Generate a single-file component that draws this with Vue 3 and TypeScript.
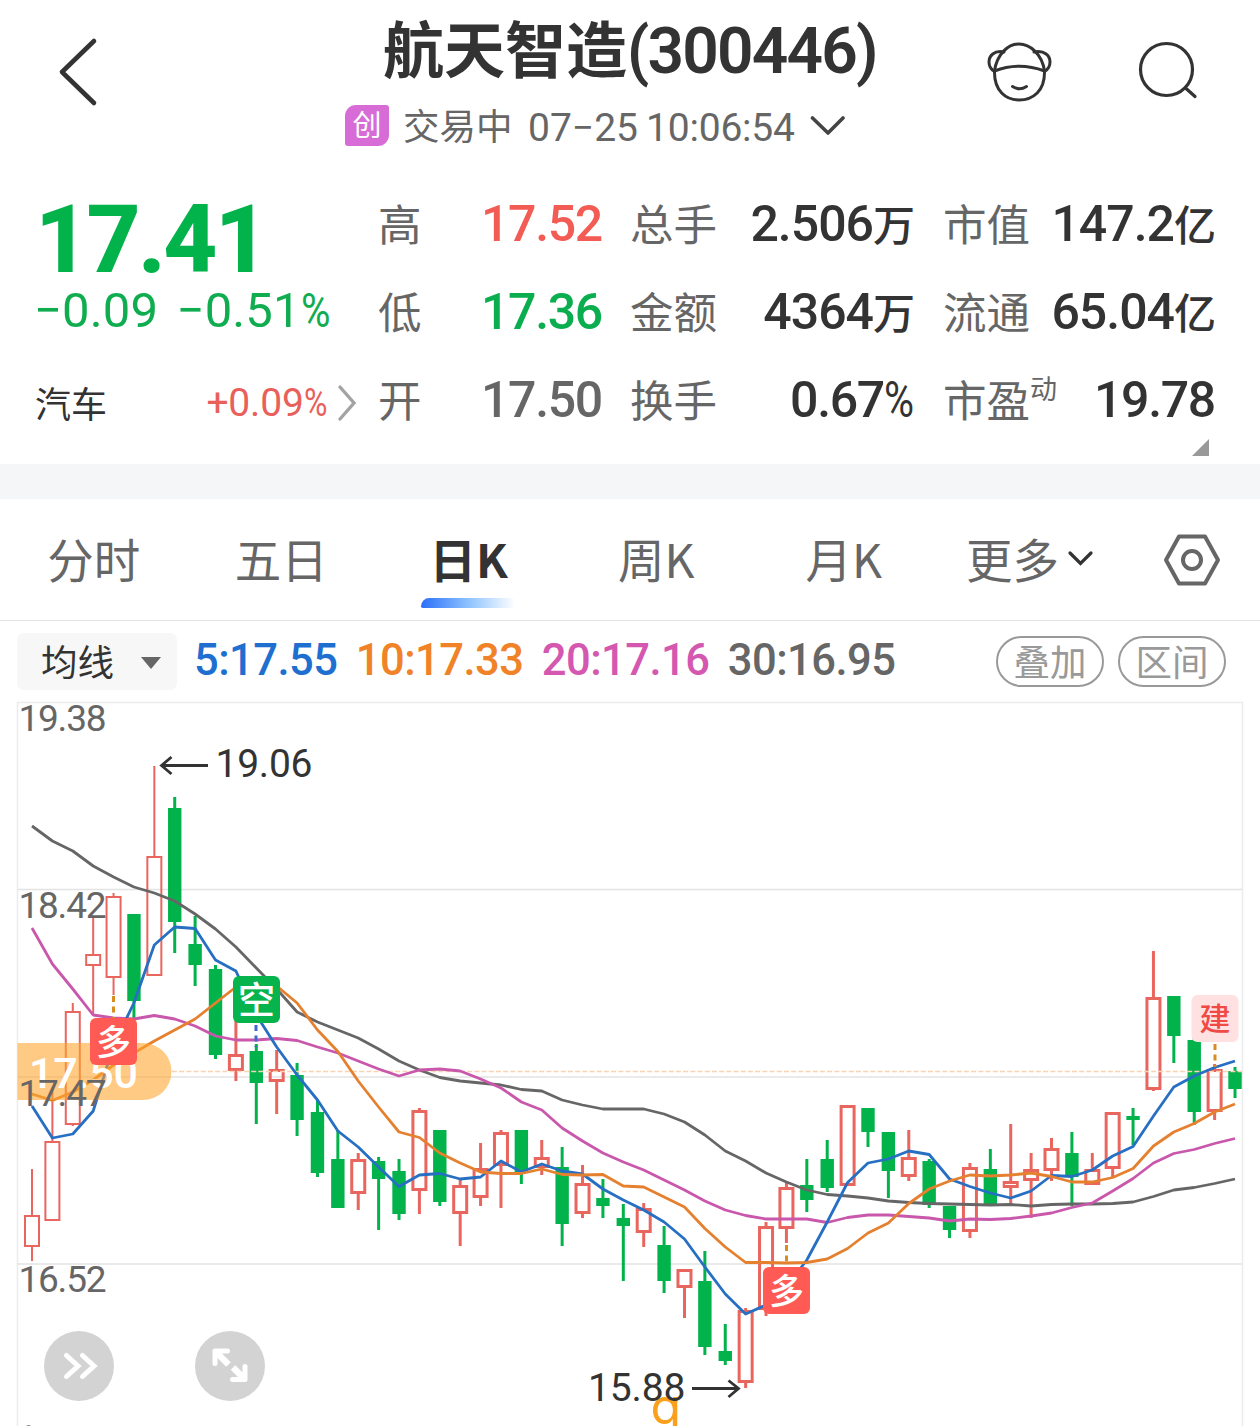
<script setup lang="ts">
interface Quote {
  label: string
  sup?: string
  value: string
  unit?: string
  tone: string
}

// kind, high, body top, body bottom, low
type Candle = ['r' | 'g', number, number, number, number]

const quotes: Quote[] = [
  { label: '高', value: '17.52', tone: 'up' },
  { label: '总手', value: '2.506', unit: '万', tone: 'dark' },
  { label: '市值', value: '147.2', unit: '亿', tone: 'dark' },
  { label: '低', value: '17.36', tone: 'down' },
  { label: '金额', value: '4364', unit: '万', tone: 'dark' },
  { label: '流通', value: '65.04', unit: '亿', tone: 'dark' },
  { label: '开', value: '17.50', tone: 'flat' },
  { label: '换手', value: '0.67', unit: '%', tone: 'dark' },
  { label: '市盈', sup: '动', value: '19.78', tone: 'dark' },
]

const tabs = ['分时', '五日', '日K', '周K', '月K']
const activeTab = '日K'

const averages = [
  { text: '5:17.55', color: '#1f6fd0' },
  { text: '10:17.33', color: '#f08228' },
  { text: '20:17.16', color: '#d457b0' },
  { text: '30:16.95', color: '#666666' },
]

const candles: Candle[] = [
  ['r', 1169, 1215, 1247, 1261], ['r', 1088, 1141, 1221, 1221], ['r', 1003, 1011, 1125, 1126],
  ['r', 918, 954, 966, 1014], ['r', 893, 896, 978, 995], ['g', 914, 914, 1001, 1018],
  ['r', 766, 856, 976, 976], ['g', 797, 808, 922, 953], ['g', 916, 944, 965, 986],
  ['g', 965, 969, 1055, 1059], ['r', 1018, 1054, 1071, 1081], ['g', 1044, 1051, 1083, 1124],
  ['r', 1050, 1069, 1082, 1114], ['g', 1063, 1075, 1120, 1136], ['g', 1100, 1112, 1173, 1177],
  ['g', 1130, 1159, 1208, 1208], ['r', 1153, 1159, 1194, 1210], ['g', 1157, 1161, 1179, 1230],
  ['g', 1159, 1171, 1214, 1220], ['r', 1108, 1110, 1191, 1214], ['g', 1130, 1130, 1202, 1206],
  ['r', 1179, 1185, 1214, 1246], ['r', 1143, 1168, 1198, 1206], ['r', 1130, 1132, 1166, 1208],
  ['g', 1130, 1130, 1173, 1184], ['r', 1140, 1157, 1168, 1175], ['g', 1147, 1167, 1224, 1246],
  ['r', 1165, 1183, 1214, 1218], ['g', 1179, 1198, 1206, 1218], ['g', 1204, 1218, 1226, 1281],
  ['r', 1203, 1208, 1233, 1247], ['g', 1226, 1245, 1281, 1293], ['r', 1269, 1269, 1288, 1318],
  ['g', 1251, 1281, 1347, 1355], ['g', 1324, 1351, 1361, 1365], ['r', 1308, 1310, 1383, 1388],
  ['r', 1222, 1226, 1310, 1316], ['r', 1183, 1187, 1229, 1243], ['g', 1159, 1185, 1200, 1212],
  ['g', 1140, 1159, 1188, 1192], ['r', 1105, 1105, 1186, 1186], ['g', 1108, 1108, 1132, 1147],
  ['g', 1132, 1132, 1171, 1198], ['r', 1130, 1157, 1177, 1181], ['g', 1159, 1161, 1205, 1208],
  ['g', 1206, 1206, 1230, 1238], ['r', 1163, 1167, 1232, 1238], ['g', 1149, 1169, 1205, 1205],
  ['r', 1124, 1181, 1188, 1206], ['r', 1153, 1169, 1181, 1218], ['r', 1138, 1148, 1171, 1181],
  ['g', 1132, 1153, 1177, 1206], ['r', 1153, 1169, 1185, 1185], ['r', 1112, 1112, 1169, 1178],
  ['g', 1108, 1116, 1120, 1145], ['r', 951, 997, 1090, 1091], ['g', 996, 996, 1036, 1063],
  ['g', 1030, 1040, 1112, 1125], ['r', 1064, 1069, 1112, 1120], ['g', 1067, 1071, 1089, 1098],
]

const ma5 = [1106, 1138, 1134, 1111, 1045, 1003, 945, 927, 928.5, 960, 971, 1015, 1047, 1075, 1100, 1131, 1147, 1167, 1186.5, 1175, 1173.5, 1179, 1177, 1161, 1172, 1164, 1171, 1174, 1189, 1200, 1210, 1222, 1239, 1267, 1294, 1314, 1305, 1287, 1260, 1222, 1182.5, 1163, 1159, 1151, 1154.5, 1179, 1186.5, 1193, 1198, 1191, 1175.5, 1176.5, 1170, 1156, 1146.5, 1116, 1087, 1076, 1067.5, 1061]
const ma10 = [1094, 1100.5, 1092, 1080, 1065, 1053, 1041, 1030, 1019, 1003, 987, 982, 986, 1003, 1030, 1051.5, 1081, 1107, 1132, 1137.5, 1153, 1163, 1172, 1173.5, 1173.5, 1169, 1174.5, 1175, 1174.5, 1186, 1187, 1197, 1207, 1228.5, 1247, 1262.5, 1262.5, 1263, 1262.5, 1259, 1248.5, 1233, 1223, 1203.5, 1189, 1181, 1175, 1176, 1175, 1173, 1176.5, 1182, 1182, 1177.5, 1168.5, 1146, 1132, 1123.5, 1112, 1104]
const ma20 = [928, 964, 989, 1015, 1018, 1019, 1015.5, 1019, 1026, 1036, 1040, 1040, 1038.5, 1040.5, 1047, 1053, 1061, 1069, 1076, 1070, 1069, 1071, 1079, 1088, 1102, 1110, 1128, 1141, 1153, 1162, 1170, 1180, 1190, 1201, 1210, 1215.5, 1219, 1219, 1219, 1222.5, 1217.5, 1215, 1215, 1216.5, 1218, 1221, 1219, 1219.5, 1218.5, 1216, 1213, 1207.5, 1203, 1191, 1178.5, 1163, 1153.5, 1149.5, 1143.5, 1138.5]
const ma30 = [826, 841, 851, 866, 877, 887, 893, 901, 914, 929, 947, 968, 989, 1012, 1022, 1030, 1038, 1049, 1061, 1070, 1077.5, 1081, 1083, 1085, 1089.5, 1091, 1100, 1105, 1109, 1109, 1109, 1114, 1122, 1135, 1151, 1161, 1173, 1182, 1190, 1194.5, 1196, 1198, 1201, 1202.5, 1203.5, 1204, 1204.5, 1205, 1204.5, 1206, 1204.5, 1204, 1204, 1203.5, 1202, 1196.5, 1190, 1187.5, 1183.5, 1179]

const cx = (i: number): number => 32 + i * 20.39
const line = (ys: number[]): string => ys.map((y, i) => `${cx(i).toFixed(1)},${y}`).join(' ')

// the oldest bars are drawn with a finer outline
const pen = (i: number): number => (i < 7 ? 2 : 3)

const lines = [
  { points: line(ma30), color: '#666666' },
  { points: line(ma20), color: '#c957ab' },
  { points: line(ma5), color: '#266fc2' },
  { points: line(ma10), color: '#e5802f' },
]

const axis = [
  { text: '19.38', y: 731 },
  { text: '18.42', y: 918 },
  { text: '17.47', y: 1106 },
  { text: '16.52', y: 1292 },
]

const marks = [
  { text: '多', x: 90, y: 1018, bg: '#ff5a54', fg: '#fff', size: 35 },
  { text: '空', x: 233, y: 976, bg: '#06b34c', fg: '#fff', size: 37 },
  { text: '多', x: 763, y: 1267, bg: '#ff5a54', fg: '#fff', size: 35 },
  { text: '建', x: 1191.5, y: 995, bg: '#ffe1e1', fg: '#f04a45', size: 31 },
]
</script>

<template>
  <div class="page">
    <header class="top">
      <div class="side left">
        <svg width="48" height="76" viewBox="0 0 48 76"><path d="M41 7 L9 38 L41 69" fill="none" stroke="#333" stroke-width="4.6" stroke-linecap="round" stroke-linejoin="round" /></svg>
      </div>
      <div class="heading">
        <h1>航天智造<span class="code">(300446)</span></h1>
        <div class="status">
          <span class="board">创</span>
          <span class="state">交易中</span>
          <span class="date">07−25</span>
          <span class="time">10:06:54</span>
          <svg width="38" height="26" viewBox="0 0 38 26"><path d="M2.500 5 L18 20 L33 5" fill="none" stroke="#444" stroke-width="3.6" stroke-linecap="round" stroke-linejoin="round" /></svg>
        </div>
      </div>
      <div class="side right">
        <svg width="70" height="66" viewBox="984 38 70 66">
          <g fill="none" stroke="#333" stroke-width="3" stroke-linecap="round" stroke-linejoin="round">
            <path d="M994.5 71 C994 91 1006 100 1019 100 C1033 100 1045 91 1044.5 71" />
            <path d="M994.5 71 C997 54 1008 44 1019 44 C1030 44 1042 54 1044.5 71" />
            <path d="M994.5 71 Q1019 61.5 1044.5 71" />
            <path d="M1004 52 C994 50 989 56 989 62 C989 67 992 70 994.5 71.5" />
            <path d="M1034 52 C1045 50 1050 56 1050 62 C1050 67 1047 70 1044.5 71.5" />
            <path d="M1012.5 86.5 Q1019.5 91 1026.5 86.5" />
          </g>
        </svg>
        <svg width="66" height="66" viewBox="1134 38 66 66">
          <g fill="none" stroke="#333" stroke-width="3.2" stroke-linecap="round">
            <circle cx="1166.5" cy="69.5" r="26" /><path d="M1185.5 88 L1195 96.5" />
          </g>
        </svg>
      </div>
    </header>

    <section class="summary">
      <div class="price">
        <div class="last">17.41</div>
        <div class="change"><span>−0.09</span><span>−0.51<i class="pct">%</i></span></div>
        <div class="sector">
          <span class="name">汽车</span>
          <span class="rate">+0.09<i class="pct">%</i></span>
          <svg width="22" height="40" viewBox="0 0 22 40"><path d="M4 4 L18 20 L4 36" fill="none" stroke="#a3a3a3" stroke-width="3.4" stroke-linecap="round" /></svg>
        </div>
      </div>
      <div class="grid">
        <div v-for="q in quotes" :key="q.label" class="cell">
          <span class="label">{{ q.label }}<sup v-if="q.sup">{{ q.sup }}</sup></span>
          <span class="value" :class="[q.tone, { lowered: q.unit && q.unit !== '%' }]">{{ q.value }}<i v-if="q.unit === '%'" class="pct">%</i><b v-else-if="q.unit">{{ q.unit }}</b></span>
        </div>
      </div>
      <i class="corner"></i>
    </section>

    <div class="band"></div>

    <nav class="tabs">
      <div v-for="t in tabs" :key="t" class="tab" :class="{ active: t === activeTab }">{{ t }}</div>
      <div class="more">
        更多
        <svg width="30" height="20" viewBox="0 0 30 20"><path d="M4 5 L14.500 15.500 L25 5" fill="none" stroke="#333" stroke-width="3.200" stroke-linecap="round" /></svg>
      </div>
      <svg class="gear" width="60" height="56" viewBox="0 0 60 56">
        <path d="M17 4.500 H43 L56 28 L43 51.500 H17 L4 28 Z" fill="none" stroke="#666" stroke-width="4" stroke-linejoin="round" />
        <circle cx="30" cy="28" r="9" fill="none" stroke="#666" stroke-width="4" />
      </svg>
    </nav>

    <div class="tools">
      <div class="select">均线<i></i></div>
      <div class="averages">
        <span v-for="a in averages" :key="a.text" :style="{ color: a.color }">{{ a.text }}</span>
      </div>
      <div class="pill">叠加</div>
      <div class="pill">区间</div>
    </div>

    <svg class="chart" width="1260" height="726" viewBox="0 700 1260 726">
      <defs><clipPath id="plot"><rect x="17" y="701" width="1225" height="725" /></clipPath></defs>
      <g stroke="#ececec" stroke-width="1.5" fill="none">
        <path d="M17.500 1426 V702.500 H1242.500 V1426" />
        <path d="M17 889.500 H1242 M17 1077 H1242 M17 1264 H1242" stroke="#e3e3e3" />
      </g>
      <g clip-path="url(#plot)">
        <template v-for="(c, i) in candles" :key="i">
          <g v-if="c[0] === 'g'" fill="#02b34b">
            <rect :x="cx(i) - 1.5" :y="c[1]" width="3" :height="c[4] - c[1]" />
            <rect :x="cx(i) - 6.7" :y="c[2]" width="13.400" :height="c[3] - c[2]" />
          </g>
          <g v-else fill="none" stroke="#e9665f" :stroke-width="pen(i)">
            <path :d="`M${cx(i)} ${c[1]} V${c[2]} M${cx(i)} ${c[3]} V${c[4]}`" />
            <rect :x="cx(i) - 8 + pen(i) / 2" :y="c[2] + pen(i) / 2" :width="16 - pen(i)" :height="c[3] - c[2] - pen(i)" />
          </g>
        </template>
      </g>
      <path d="M172 1071.500 H1242" stroke="#f8d3b4" stroke-width="1.600" stroke-dasharray="5 2.200" />
      <polyline v-for="l in lines" :key="l.color" :points="l.points" :stroke="l.color" fill="none" stroke-width="2.800" stroke-linejoin="round" />
      <g fill="none" stroke-width="3" stroke-dasharray="6 4.500">
        <path d="M113.500 996 V1018 M786.500 1245 V1264 M1215 1044 V1067" stroke="#d88d22" />
        <path d="M256 1025 V1047" stroke="#3f66d2" />
      </g>

      <path d="M17.500 1043 H143 A28.500 28.500 0 0 1 143 1100 H17.500 Z" fill="#ffa62b" fill-opacity="0.58" />
      <text class="num bold" x="29" y="1088" font-size="43" fill="#fff" textLength="109">17.50</text>
      <text v-for="a in axis" :key="a.text" class="num axis" x="18.500" :y="a.y" font-size="37" textLength="88">{{ a.text }}</text>

      <g fill="none" stroke="#333" stroke-width="2.800">
        <path d="M208 765.500 H161 M171.500 757 L161.500 765.500 L171.500 774" />
        <path d="M692 1388.500 H739 M728.500 1380.500 L738.500 1388.500 L728.500 1397" />
      </g>
      <text class="num" x="215.500" y="777" font-size="39" fill="#333" textLength="97">19.06</text>
      <text class="brand" x="650.500" y="1424" font-size="50" fill="#fba01c">q</text>
      <text class="num" x="588" y="1401" font-size="39" fill="#333" textLength="97.500">15.88</text>

      <g v-for="(m, i) in marks" :key="i">
        <rect :x="m.x" :y="m.y" width="47" height="47" rx="6" :fill="m.bg" />
        <text class="mark" :x="m.x + 23.5" :y="m.y + 23.500 + m.size * 0.38" :font-size="m.size" :fill="m.fg">{{ m.text }}</text>
      </g>

      <circle cx="79" cy="1366" r="35" fill="#d3d3d3" />
      <circle cx="230" cy="1366" r="35" fill="#d3d3d3" />
      <g fill="none" stroke="#fff" stroke-width="5" stroke-linecap="round">
        <path d="M66.500 1355.500 L78 1366 L66.500 1376.500 M82.500 1355.500 L94 1366 L82.500 1376.500" />
        <path d="M215 1363.500 V1351 H227.500 M245 1366.500 V1379.500 H232.500" stroke-linejoin="round" />
        <path d="M216.500 1352.500 L228.500 1364.500 M243.500 1378 L233 1367.500" stroke-width="6.500" stroke-linecap="butt" />
      </g>
      <path d="M26 1426 Q28.500 1424 31 1426" fill="#888" />
    </svg>
  </div>
</template>

<style>
body {
  background: #fff;
}
</style>

<style scoped>
.page {
  width: 1260px;
  height: 1426px;
  overflow: hidden;
  background: #fff;
  color: #333;
  font-family: Roboto, "Noto Sans CJK SC", sans-serif;
  line-height: 1.2;
}
svg {
  display: block;
  flex: none;
}
i,
b {
  font-style: normal;
  font-weight: inherit;
}
.pct {
  display: inline-block;
  width: 0.6em;
  transform: scaleX(0.82);
  transform-origin: left center;
  font-weight: 400;
}
.top {
  display: flex;
  height: 180px;
}
.side {
  box-sizing: border-box;
  display: flex;
  flex: none;
}
.left {
  width: 340px;
  padding: 34px 0 0 53px;
}
.right {
  flex: 1;
  padding: 38px 0 0 64px;
  gap: 80px;
}
.heading {
  width: 580px;
}
h1 {
  margin: 0;
  padding: 8px 0 0 43px;
  height: 88px;
  box-sizing: border-box;
  line-height: 88px;
  font-size: 61px;
  font-weight: 700;
  white-space: nowrap;
}
h1 .code {
  font-size: 64px;
  font-weight: 600;
  letter-spacing: -1.800px;
}
.status {
  display: flex;
  align-items: center;
  height: 44px;
  margin: 16px 0 0 5px;
  color: #666;
  white-space: nowrap;
}
.board {
  width: 44px;
  height: 41px;
  margin-top: -2px;
  border-radius: 11px 3px 11px 3px;
  background: #d76cd6;
  color: #fff;
  font-size: 29px;
  line-height: 42px;
  text-align: center;
}
.state {
  margin-left: 14px;
  width: 125px;
  padding-top: 3px;
  font-size: 36.500px;
}
.date {
  width: 118px;
  padding-top: 4px;
  font-size: 39px;
}
.time {
  width: 164px;
  padding-top: 4px;
  font-size: 39px;
  letter-spacing: -0.200px;
}
.summary {
  position: relative;
  display: flex;
  height: 284px;
}
.price {
  box-sizing: border-box;
  width: 378px;
  flex: none;
  padding-left: 35px;
}
.last {
  height: 100px;
  margin-top: 10px;
  line-height: 101px;
  font-size: 94px;
  font-weight: 800;
  letter-spacing: -2.700px;
  color: #02b34b;
}
.change {
  display: flex;
  justify-content: space-between;
  width: 296px;
  height: 42px;
  margin-left: -1px;
  line-height: 41px;
  font-size: 49px;
  letter-spacing: 0.100px;
  color: #10ad50;
  white-space: nowrap;
}
.sector {
  display: flex;
  align-items: center;
  height: 50px;
  margin-top: 46px;
  font-size: 36px;
}
.name {
  padding-top: 8px;
}
.rate {
  margin-left: auto;
  font-size: 39px;
  letter-spacing: -0.200px;
  color: #e9605a;
}
.sector svg {
  margin: 0 20px 0 9px;
}
.grid {
  display: grid;
  grid-template-columns: 224px 312px 301px;
  grid-template-rows: repeat(3, 88px);
  width: 837px;
}
.cell {
  display: flex;
  align-items: center;
  justify-content: space-between;
  line-height: 60px;
  white-space: nowrap;
}
.cell:nth-child(3n + 2) {
  padding-left: 28px;
}
.cell:nth-child(3n) {
  padding-left: 29px;
}
.label {
  padding-top: 5px;
  font-size: 43.500px;
  color: #666;
}
.label sup {
  display: inline-block;
  vertical-align: 18px;
  font-size: 27px;
  line-height: 1;
  height: 20px;
}
.value {
  font-size: 50px;
  font-weight: 500;
  letter-spacing: -1.300px;
}
.value.lowered {
  padding-top: 2px;
  letter-spacing: -1px;
}
.value b {
  font-size: 42px;
}
.dark {
  color: #333;
}
.up {
  color: #f25c55;
}
.down {
  color: #0aae4e;
}
.flat {
  color: #666;
}
.corner {
  position: absolute;
  right: 51px;
  bottom: 8px;
  width: 17px;
  height: 17px;
  background: #999;
  clip-path: polygon(100% 0, 100% 100%, 0 100%);
}
.band {
  height: 35px;
  background: #f5f6f8;
}
.tabs {
  display: flex;
  height: 121px;
  border-bottom: 1px solid #e4e4e4;
  font-family: "Noto Sans CJK SC", sans-serif;
  font-size: 46.500px;
  line-height: 117px;
  color: #666;
}
.tab {
  position: relative;
  width: 187.500px;
  flex: none;
  text-align: center;
}
.active {
  color: #333;
  font-weight: 700;
}
.active::after {
  content: "";
  position: absolute;
  left: 46px;
  top: 99px;
  width: 94px;
  height: 10px;
  border-radius: 9px 4px 0 2px;
  background: linear-gradient(90deg, #2b6ff8, #91c5ff 52%, #fff);
}
.more {
  display: flex;
  align-items: center;
  width: 222px;
  height: 117px;
  margin-left: 28.500px;
}
.more svg {
  margin-left: 7px;
}
.gear {
  margin: 33px 0 0 -26px;
}
.tools {
  display: flex;
  height: 79px;
  padding-left: 17px;
  align-items: flex-start;
}
.select {
  display: flex;
  align-items: center;
  justify-content: space-between;
  box-sizing: border-box;
  width: 160px;
  height: 57px;
  margin-top: 12px;
  padding: 0 16px 0 24px;
  border-radius: 7px;
  background: #f7f7f7;
  font-size: 36.500px;
  line-height: 63px;
  color: #333;
}
.select i {
  width: 20px;
  height: 12px;
  background: #666;
  clip-path: polygon(0 0, 100% 0, 50% 100%);
}
.averages {
  display: flex;
  width: 819px;
  padding-left: 17px;
  box-sizing: border-box;
  gap: 18.500px;
  font-size: 43.500px;
  font-weight: 500;
  letter-spacing: -0.550px;
  line-height: 79px;
  white-space: nowrap;
}
.select {
  padding-top: 3px;
}
.pill {
  box-sizing: border-box;
  width: 108px;
  height: 51px;
  margin: 15px 14px 0 0;
  border: 2px solid #999;
  border-radius: 26px;
  font-size: 36.500px;
  line-height: 52px;
  text-align: center;
  color: #999;
}
.num {
  font-family: Roboto, sans-serif;
}
.bold {
  font-weight: 500;
}
.axis {
  fill: #666;
}
.mark {
  font-family: "Noto Sans CJK SC", sans-serif;
  font-weight: 500;
  text-anchor: middle;
}
.brand {
  font-family: Inter, sans-serif;
}
</style>
